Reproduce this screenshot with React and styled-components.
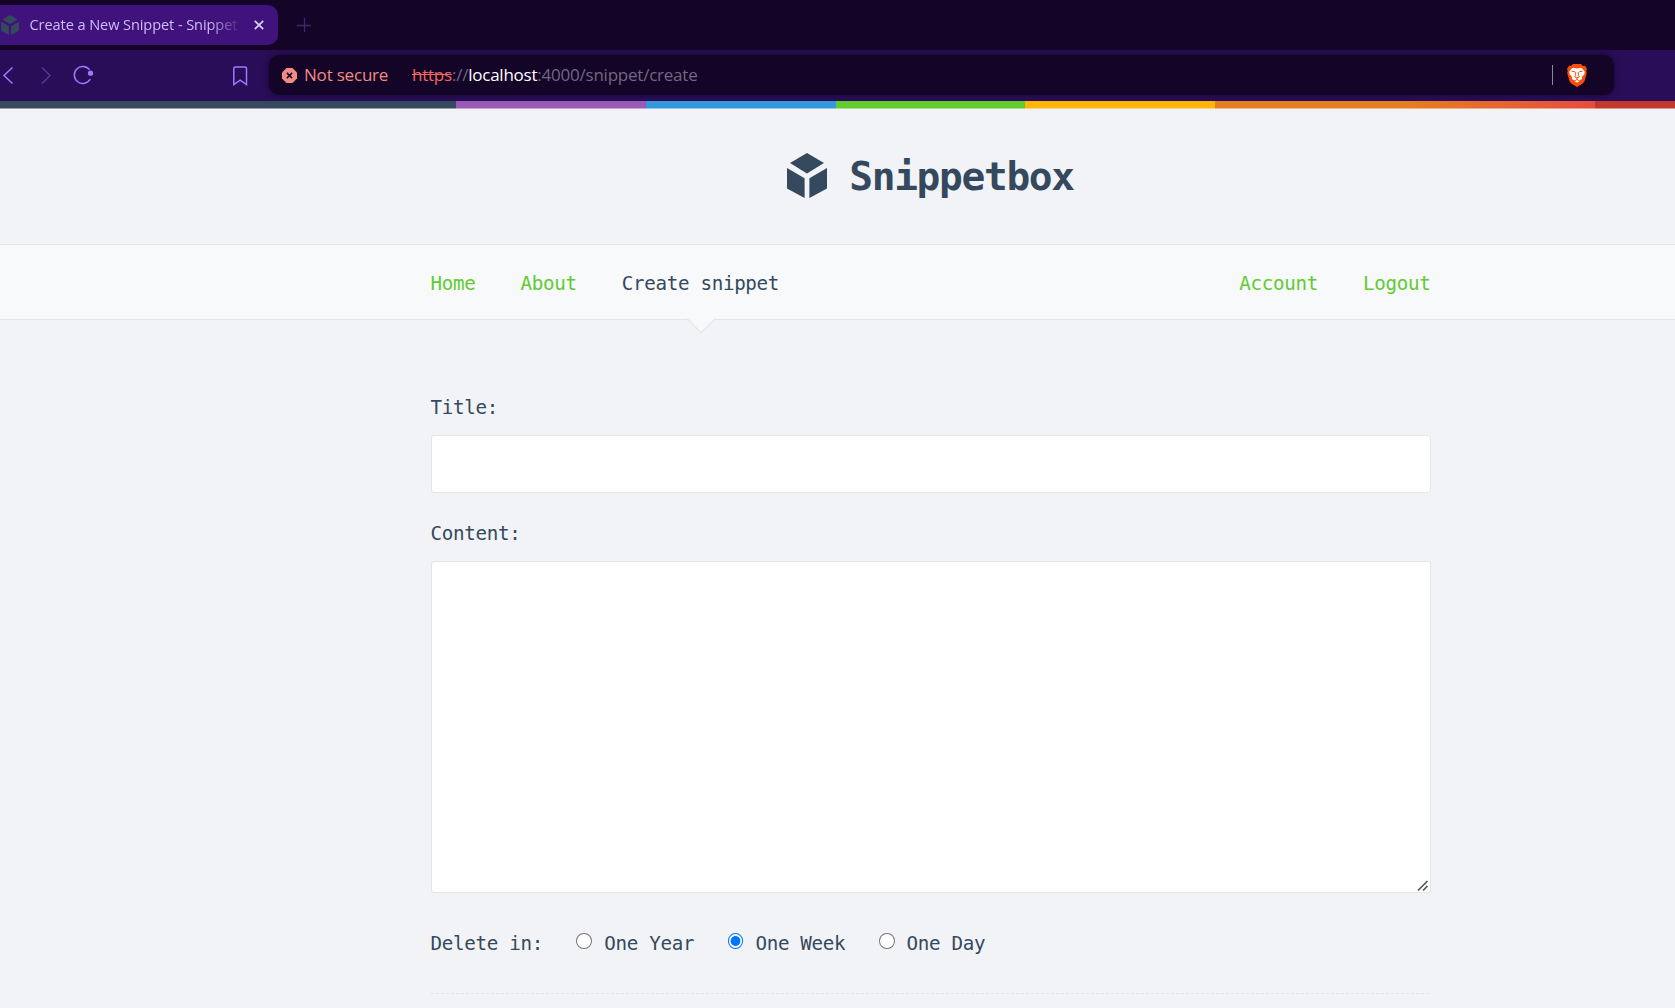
import React from "react";
import styled, { createGlobalStyle, css } from "styled-components";

const Global = createGlobalStyle`
  *, *::before, *::after { box-sizing: border-box; }
  html, body { margin: 0; overflow: hidden; background: #f1f3f6; }
`;

const mono = css`
  font-family: "DejaVu Sans Mono", "Liberation Mono", monospace;
  font-size: 19.2px;
  letter-spacing: -0.309px;
  line-height: 27px;
  color: #34495e;
  white-space: pre;
`;

const ui = css`
  font-family: "Open Sans", "Noto Sans", sans-serif;
  white-space: nowrap;
`;

const Window = styled.div`
  width: 1675px;
  height: 1008px;
  overflow: hidden;
  background: #f1f3f6;
`;

const TabStrip = styled.div`
  height: 50px;
  display: flex;
  align-items: center;
  padding-bottom: 1px;
  background: #140428;
`;

const Tab = styled.div`
  width: 278px;
  height: 40px;
  margin-top: 1px;
  display: flex;
  align-items: center;
  padding-left: 1px;
  border-radius: 0 10px 10px 0;
  background: #3f127c;
`;

const TabTitle = styled.div`
  ${ui}
  width: 210px;
  margin-left: 10.5px;
  margin-right: 14px;
  padding-bottom: 2px;
  font-size: 14.6px;
  letter-spacing: -0.1px;
  line-height: 22px;
  color: #d0bcf7;
  mask-image: linear-gradient(90deg, #000 85%, transparent 101%);
`;

const NewTab = styled.div`
  margin-left: 19px;
  display: flex;
`;

const Toolbar = styled.div`
  height: 51px;
  display: flex;
  align-items: center;
  overflow: hidden;
  background: #2a0d58;
`;

const NavIcons = styled.div`
  width: 269px;
  display: flex;
  align-items: center;
`;

const AddressBar = styled.div`
  ${ui}
  width: 1345px;
  height: 40px;
  margin-top: -1px;
  padding: 0 27px 0 12.5px;
  display: flex;
  align-items: center;
  border-radius: 10px;
  background: #140428;
  box-shadow: 0 0 6px rgba(10, 0, 30, 0.6);
  font-size: 17px;
`;

const NotSecure = styled.span`
  margin-left: 7.5px;
  padding-bottom: 2px;
  width: 108px;
  letter-spacing: -0.2px;
  color: #f28b82;
`;

const Url = styled.span`
  flex: 1;
  padding-bottom: 2px;
  letter-spacing: -0.23px;
  color: #726880;
`;

const Scheme = styled.span`
  color: #f0685f;
  text-decoration: line-through;
`;

const Host = styled.span`
  color: #fff;
`;

const Divider = styled.span`
  width: 1px;
  height: 20px;
  margin-right: 14px;
  background: #8d8894;
`;

const Page = styled.div`
  width: 1861px;
`;

const Stripe = styled.div`
  height: 8px;
  border-bottom: 1px solid rgba(241, 243, 246, 0.5);
  background: linear-gradient(
    90deg,
    #34495e 456px, #9b59b6 456px 646px, #3498db 646px 836px,
    #62cb31 836px 1025px, #ffb606 1025px 1215px,
    #e67e22 1215px 1405px, #e74c3c 1595px, #c0392b 1595px
  );
`;

const Header = styled.header`
  height: 135px;
  display: flex;
  justify-content: center;
  align-items: flex-start;
  padding-top: 44px;
`;

const Brand = styled.h1`
  ${mono}
  margin: 0;
  display: flex;
  gap: 22px;
  font-size: 39.5px;
  line-height: 46px;
  letter-spacing: -1.33px;
  font-weight: 700;
`;

const NavBar = styled.nav`
  height: 76px;
  display: flex;
  align-items: center;
  background: #f7f9fa;
  border-top: 1px solid #e4e5e7;
  border-bottom: 1px solid #e4e5e7;
`;

const Container = styled.div`
  width: 1000px;
  margin: 0 auto;
`;

const NavInner = styled(Container)`
  display: flex;
  justify-content: space-between;
`;

const NavGroup = styled.div`
  display: flex;
  gap: 45px;
`;

const NavLink = styled.a`
  ${mono}
  position: relative;
  padding-top: 2px;
  color: ${(p) => (p.$active ? "#34495e" : "#62cb31")};
  ${(p) =>
    p.$active &&
    css`
      &::after {
        content: "";
        position: absolute;
        left: calc(50% - 9.5px);
        top: 40.5px;
        width: 20.5px;
        height: 20.5px;
        transform: rotate(45deg);
        background: linear-gradient(135deg, transparent 50%, #f7f9fa 50%);
        border: 1px solid transparent;
        border-right-color: #e4e5e7;
        border-bottom-color: #e4e5e7;
      }
      &::before {
        content: "";
        position: absolute;
        z-index: 1;
        left: calc(50% - 12.5px);
        top: 49px;
        width: 26px;
        height: 2px;
        background: #f7f9fa;
      }
    `}
`;

const Form = styled.form`
  padding-top: 74px;
`;

const Label = styled.label`
  ${mono}
  display: block;
`;

const Input = styled.input`
  display: block;
  width: 1000px;
  height: 58px;
  margin: 14px 0 27px;
  background: #fff;
  border: 1px solid #e4e5e7;
  border-radius: 3px;
  outline: none;
`;

const Area = styled.div`
  display: flex;
  justify-content: flex-end;
  align-items: flex-end;
  width: 1000px;
  height: 332px;
  margin: 14px 0 37px;
  padding: 0 1px 0 0;
  background: #fff;
  border: 1px solid #e4e5e7;
  border-radius: 3px;
`;

const Options = styled.div`
  display: flex;
  align-items: center;
  height: 27px;
`;

const Choice = styled.label`
  ${mono}
  display: flex;
  margin-left: 33.5px;
  gap: 12px;
  align-items: center;
`;

const Radio = styled.input`
  appearance: none;
  width: 15.75px;
  height: 16px;
  margin: -5px 0 0;
  border: 1px solid #767676;
  border-radius: 50%;
  background: #fff;
  &:checked {
    border-color: #0075ff;
    background: radial-gradient(circle, #0075ff 4.5px, #fff 5.3px);
  }
`;

const Rule = styled.div`
  height: 1px;
  margin-top: 36px;
  background: repeating-linear-gradient(90deg, #e1e3e6 0 3px, transparent 3px 5px);
`;

const Cube = ({ width, height }) => (
  <svg width={width} height={height} viewBox="0 0 40 45" fill="#34495e">
    <path d="M20 0 37 10 20 20.4 3 10Z" />
    <path d="M0 15 17.6 25.2V45L0 35.4Z" />
    <path d="M40 15 22.4 25.2V45L40 35.4Z" />
  </svg>
);

const TabClose = () => (
  <svg width="10" height="10" viewBox="0 0 10 10" stroke="#dccdfa" strokeWidth="1.8">
    <path d="M.8.8l8.4 8.4M9.2.8L.8 9.2" />
  </svg>
);

const Plus = () => (
  <svg width="14" height="14" viewBox="0 0 14 14" stroke="#43266d" strokeWidth="1.3">
    <path d="M7.5 0v14M0 7.5h14" />
  </svg>
);

const Controls = () => (
  <svg width="260" height="30" viewBox="0 0 260 30" fill="none" stroke="#a078ff" strokeWidth="1.5">
    <path d="M12.5 6.500 4 14.500l8.500 8" />
    <path d="M42 6.500l8 8-8 8" stroke="#593596" />
    <path d="M90.300 18A8.500 8.500 0 1 1 89.600 8.800" />
    <circle cx="90.500" cy="12.200" r="2.600" fill="#a078ff" stroke="none" />
    <path d="M233.800 7.500q0-1.500 1.500-1.500h9.700q1.500 0 1.500 1.500v16l-6.350-4.300-6.350 4.300Z" />
  </svg>
);

const Warning = () => (
  <svg width="15" height="15" viewBox="0 0 15 15">
    <path d="M4.500 0h6L15 4.500v6L10.500 15h-6L0 10.500v-6Z" fill="#f28b82" />
    <path d="M4.900 4.900l5.200 5.200M10.100 4.900l-5.200 5.200" stroke="#140428" strokeWidth="1.500" />
  </svg>
);

const Lion = () => (
  <svg width="20" height="23" viewBox="0 0 20 23">
    <path fill="#fb4d08" d="M6 0h8l2 2 2-.2L20 5l-.7 2 .5 2-2.500 8.800-2 2L10 23l-5.300-3.200-2-2L.2 9l.5-2L0 5l2-3.200L4 2Z" />
    <path fill="#fff" d="M6.500 3.700 10 4.400l3.500-.7 1.500.5 2.800 3.600-.5 2.500-2.500 3 .3 1.800-2.100 1-1.500 1.100 1 .5L10 18.600l-2.500-1.400 1-.5L7 16.100l-2.100-1 .3-1.800-2.500-3-.5-2.500L5 4.200Z" />
    <path fill="none" stroke="#fb4d08" strokeWidth="1" d="M4.500 7.200l3.300.5M15.500 7.200l-3.300.5M8.700 8v3.300L7.600 12.800l2.400 1.200 2.400-1.200-1.100-1.500V8M10 14v1.600M8.200 16.600l1.800-1.100 1.800 1.100" />
  </svg>
);

const Grip = () => (
  <svg width="12" height="12" viewBox="0 0 12 12" fill="none" stroke="#555" strokeWidth="1.700">
    <path d="M1 10.500 10.500 1M6 10.500 10.500 6" />
  </svg>
);

const Option = ({ label, checked }) => (
  <Choice>
    <Radio type="radio" name="expires" defaultChecked={checked} />
    {label}
  </Choice>
);

export default function App() {
  return (
    <Window>
      <Global />
      <TabStrip>
        <Tab>
          <Cube width={18} height={20} />
          <TabTitle>Create a New Snippet - Snippet</TabTitle>
          <TabClose />
        </Tab>
        <NewTab><Plus /></NewTab>
      </TabStrip>
      <Toolbar>
        <NavIcons><Controls /></NavIcons>
        <AddressBar>
          <Warning />
          <NotSecure>Not secure</NotSecure>
          <Url>
            <Scheme>https</Scheme>://<Host>localhost</Host>:4000/snippet/create
          </Url>
          <Divider />
          <Lion />
        </AddressBar>
      </Toolbar>
      <Page>
        <Stripe />
        <Header>
          <Brand><Cube width={40} height={45} />Snippetbox</Brand>
        </Header>
        <NavBar>
          <NavInner>
            <NavGroup>
              <NavLink>Home</NavLink>
              <NavLink>About</NavLink>
              <NavLink $active>Create snippet</NavLink>
            </NavGroup>
            <NavGroup>
              <NavLink>Account</NavLink>
              <NavLink>Logout</NavLink>
            </NavGroup>
          </NavInner>
        </NavBar>
        <Container>
          <Form>
            <Label>Title:</Label>
            <Input type="text" />
            <Label>Content:</Label>
            <Area><Grip /></Area>
            <Options>
              <Label>Delete in:</Label>
              <Option label="One Year" />
              <Option label="One Week" checked />
              <Option label="One Day" />
            </Options>
            <Rule />
          </Form>
        </Container>
      </Page>
    </Window>
  );
}
